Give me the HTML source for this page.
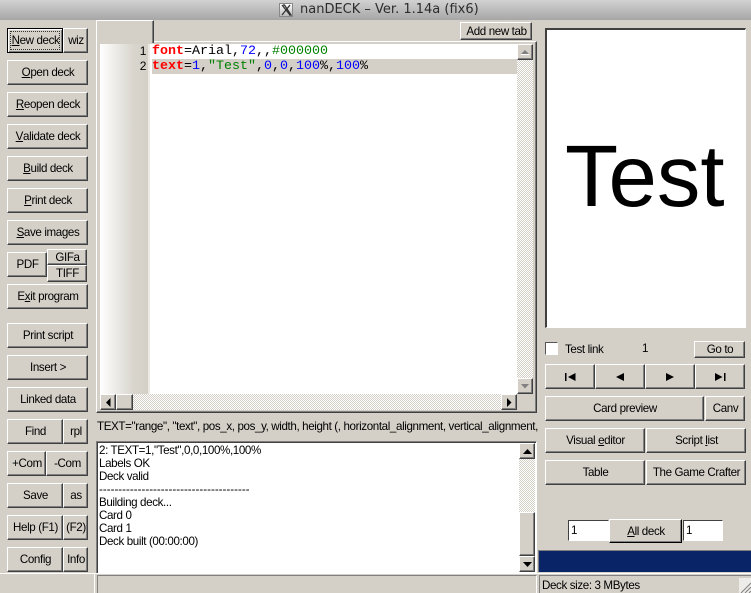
<!DOCTYPE html>
<html><head><meta charset="utf-8">
<style>
html,body{margin:0;padding:0;background:#d4d0c8}
#r{position:relative;width:751px;height:593px;overflow:hidden;background:#d4d0c8;font:11.6px/1 "Liberation Sans",sans-serif;letter-spacing:-.38px;color:#000}
#r div{position:absolute;box-sizing:border-box}
.b{background:#d4d0c8;border-top:1px solid #fff;border-left:1px solid #fff;border-right:1px solid #404040;border-bottom:1px solid #404040;box-shadow:inset -1px -1px 0 #808080;display:flex;align-items:center;justify-content:center;white-space:pre;padding:1px 0 0 1px}
.s{background:#fff;border-top:1px solid #404040;border-left:1px solid #404040;border-right:1px solid #fff;border-bottom:1px solid #fff}
.t{white-space:nowrap}
.d{background:repeating-conic-gradient(#fff 0 25%,#d4d0c8 0 50%) 0 0/2px 2px}
.c{font:13.33px/15px "Liberation Mono",monospace;letter-spacing:0;white-space:pre;color:#000}
.c b{color:#f00}.c i{font-style:normal;color:#00f}.c u{text-decoration:none;color:#008000}
.l{left:99px;white-space:nowrap;height:13px;line-height:13px}
u.m{text-decoration:underline}
svg{display:block}
</style></head><body><div id="r">

<div style="left:0;top:0;width:751px;height:20px;background:linear-gradient(#d2d2d2,#a6a6a6)"></div>
<div style="left:279px;top:3px;width:14px;height:14px;background:linear-gradient(#fff,#bbb);border:1px solid #888"><svg width="12" height="12"><path d="M2 1L10 11M3 1L4.500 1L11 11L9 11M10 1L2 11" stroke="#333" stroke-width="1.300" fill="none"/></svg></div>
<div class="t" style="left:300px;top:2px;font:13px/16px 'DejaVu Sans',sans-serif;color:#2c2c2c;letter-spacing:0">nanDECK – Ver. 1.14a (fix6)</div>

<!-- left buttons -->
<div class="b" style="left:7px;top:28px;width:56px;height:25px;border:1px solid #000;box-shadow:inset 1px 1px 0 #fff,inset -1px -1px 0 #808080"><u class="m">N</u>ew deck</div>
<div style="left:10px;top:31px;width:50px;height:19px;border:1px dotted #333"></div>
<div class="b" style="left:63px;top:28px;width:25px;height:25px">wiz</div>
<div class="b" style="left:7px;top:60px;width:81px;height:25px"><u class="m">O</u>pen deck</div>
<div class="b" style="left:7px;top:92px;width:81px;height:25px"><u class="m">R</u>eopen deck</div>
<div class="b" style="left:7px;top:124px;width:81px;height:25px"><u class="m">V</u>alidate deck</div>
<div class="b" style="left:7px;top:156px;width:81px;height:25px"><u class="m">B</u>uild deck</div>
<div class="b" style="left:7px;top:188px;width:81px;height:25px"><u class="m">P</u>rint deck</div>
<div class="b" style="left:7px;top:220px;width:81px;height:25px"><u class="m">S</u>ave images</div>
<div class="b" style="left:7px;top:252px;width:40px;height:25px">PDF</div>
<div class="b" style="left:47px;top:249px;width:40px;height:16px">GIFa</div>
<div class="b" style="left:47px;top:265px;width:40px;height:17px">TIFF</div>
<div class="b" style="left:7px;top:284px;width:81px;height:25px">E<u class="m">x</u>it program</div>
<div class="b" style="left:7px;top:323px;width:81px;height:25px">Print script</div>
<div class="b" style="left:7px;top:355px;width:81px;height:25px">Insert &gt;</div>
<div class="b" style="left:7px;top:387px;width:81px;height:25px">Linked data</div>
<div class="b" style="left:7px;top:419px;width:56px;height:25px">Find</div>
<div class="b" style="left:63px;top:419px;width:25px;height:25px">rpl</div>
<div class="b" style="left:7px;top:451px;width:39px;height:25px">+Com</div>
<div class="b" style="left:46px;top:451px;width:42px;height:25px">-Com</div>
<div class="b" style="left:7px;top:483px;width:56px;height:25px">Save</div>
<div class="b" style="left:63px;top:483px;width:25px;height:25px">as</div>
<div class="b" style="left:7px;top:515px;width:56px;height:25px">Help (F1)</div>
<div class="b" style="left:63px;top:515px;width:25px;height:25px">(F2)</div>
<div class="b" style="left:7px;top:547px;width:56px;height:25px">Config</div>
<div class="b" style="left:63px;top:547px;width:25px;height:25px">Info</div>

<!-- tab control -->
<div style="left:96px;top:41px;width:441px;height:372px;border-top:1px solid #fff;border-left:1px solid #fff;border-right:1px solid #404040;border-bottom:1px solid #404040;box-shadow:inset -1px -1px 0 #808080"></div>
<div style="left:96px;top:20px;width:58px;height:23px;background:#d4d0c8;border-top:1px solid #fff;border-left:1px solid #fff;border-right:1px solid #404040;box-shadow:inset -1px 0 0 #808080"></div>
<div class="b" style="left:460px;top:22px;width:72px;height:18px">Add new tab</div>

<!-- editor -->
<div style="left:100px;top:44px;width:417px;height:350px;background:#fff"></div>
<div style="left:100px;top:44px;width:48px;height:350px;background:linear-gradient(90deg,#fff,#d8d5cd 70%,#d4d0c8)"></div>
<div style="left:148px;top:44px;width:2px;height:350px;background:#ece9e3"></div>
<div class="t" style="left:134px;top:44px;font:12px/15px 'Liberation Sans',sans-serif;width:12px;text-align:right">1</div>
<div class="t" style="left:134px;top:59px;font:12px/15px 'Liberation Sans',sans-serif;width:12px;text-align:right">2</div>
<div style="left:152px;top:59px;width:365px;height:15px;background:#d4d0c8"></div>
<div class="c" style="left:152px;top:44px"><b>font</b>=Arial,<i>72</i>,,<u>#000000</u></div>
<div class="c" style="left:152px;top:59px"><b>text</b>=<i>1</i>,<u>"Test"</u>,<i>0</i>,<i>0</i>,<i>100</i>%,<i>100</i>%</div>

<!-- editor v scrollbar -->
<div class="d" style="left:517px;top:44px;width:16px;height:350px"></div>
<div class="b" style="left:517px;top:44px;width:16px;height:16px;padding:0"><svg width="8" height="6"><path d="M4 1L8 5H0Z" fill="#808080"/><path d="M0 5.500H8" stroke="#fff"/></svg></div>
<div class="b" style="left:517px;top:378px;width:16px;height:16px;padding:0"><svg width="8" height="5"><path d="M0 0H8L4 4.500Z" fill="#808080"/></svg></div>
<!-- editor h scrollbar -->
<div class="d" style="left:100px;top:394px;width:417px;height:16px"></div>
<div class="b" style="left:100px;top:394px;width:16px;height:16px;padding:0"><svg width="5" height="9"><path d="M4.500 0V9L0 4.500Z" fill="#000"/></svg></div>
<div class="b" style="left:116px;top:394px;width:17px;height:16px"></div>
<div class="b" style="left:501px;top:394px;width:16px;height:16px;padding:0"><svg width="5" height="9"><path d="M0 0V9L4.500 4.500Z" fill="#000"/></svg></div>
<div style="left:517px;top:394px;width:16px;height:16px;background:#d4d0c8"></div>

<div class="t" style="left:97px;top:420px;line-height:13px">TEXT="range", "text", pos_x, pos_y, width, height (, horizontal_alignment, vertical_alignment,</div>

<!-- log -->
<div style="left:96px;top:441px;width:441px;height:133px;background:#fff;border-top:1px solid #808080;border-left:1px solid #808080;border-right:1px solid #fff;border-bottom:1px solid #fff;box-shadow:inset 1px 1px 0 #404040"></div>
<div class="l" style="top:444px">2: TEXT=1,"Test",0,0,100%,100%</div>
<div class="l" style="top:457px">Labels OK</div>
<div class="l" style="top:470px">Deck valid</div>
<div class="l" style="top:483px;width:150px;overflow:hidden;letter-spacing:0">--------------------------------------------------------</div>
<div class="l" style="top:496px">Building deck...</div>
<div class="l" style="top:509px">Card 0</div>
<div class="l" style="top:522px">Card 1</div>
<div class="l" style="top:535px">Deck built (00:00:00)</div>
<div class="d" style="left:519px;top:443px;width:16px;height:129px"></div>
<div class="b" style="left:519px;top:443px;width:16px;height:16px;padding:0"><svg width="9" height="5"><path d="M4.500 0L9 5H0Z" fill="#000"/></svg></div>
<div class="b" style="left:519px;top:512px;width:16px;height:44px"></div>
<div class="b" style="left:519px;top:556px;width:16px;height:16px;padding:0"><svg width="9" height="5"><path d="M0 0H9L4.500 5Z" fill="#000"/></svg></div>

<!-- preview -->
<div class="s" style="left:545px;top:28px;width:201px;height:300px;border-top:2px solid #404040;border-left:2px solid #404040"></div>
<div class="t" style="left:565px;top:128px;font:87px/97px 'Liberation Sans',sans-serif;letter-spacing:0">Test</div>

<!-- right controls -->
<div class="s" style="left:545px;top:342px;width:13px;height:13px;border-top:1px solid #555;border-left:1px solid #555"></div>
<div class="t" style="left:565px;top:343px;line-height:13px">Test link</div>
<div class="t" style="left:642px;top:342px;line-height:13px">1</div>
<div class="b" style="left:694px;top:341px;width:51px;height:17px">Go to</div>

<div class="b" style="left:545px;top:364px;width:50px;height:25px;padding:0"><svg width="11" height="8"><path d="M0 0H1.500V8H0ZM10.500 0V8L3 4Z" fill="#000"/></svg></div>
<div class="b" style="left:595px;top:364px;width:50px;height:25px;padding:0"><svg width="8" height="8"><path d="M8 0V8L0 4Z" fill="#000"/></svg></div>
<div class="b" style="left:645px;top:364px;width:50px;height:25px;padding:0"><svg width="8" height="8"><path d="M0 0V8L8 4Z" fill="#000"/></svg></div>
<div class="b" style="left:695px;top:364px;width:50px;height:25px;padding:0"><svg width="11" height="8"><path d="M0 0V8L7.500 4ZM9 0H10.500V8H9Z" fill="#000"/></svg></div>

<div class="b" style="left:545px;top:396px;width:159px;height:25px">Card preview</div>
<div class="b" style="left:705px;top:396px;width:40px;height:25px">Canv</div>
<div class="b" style="left:545px;top:428px;width:100px;height:25px">Visual <u class="m">e</u>ditor</div>
<div class="b" style="left:646px;top:428px;width:100px;height:25px">Script <u class="m">l</u>ist</div>
<div class="b" style="left:545px;top:460px;width:100px;height:25px">Table</div>
<div class="b" style="left:646px;top:460px;width:100px;height:25px">The Game Crafter</div>

<div class="s" style="left:568px;top:520px;width:41px;height:21px;padding:3px 0 0 2px;line-height:13px">1</div>
<div class="b" style="left:609px;top:519px;width:73px;height:24px;border-right-color:#000;border-bottom-color:#000"><u class="m">A</u>ll deck</div>
<div class="s" style="left:683px;top:520px;width:40px;height:21px;padding:3px 0 0 2px;line-height:13px">1</div>

<div style="left:538px;top:550px;width:213px;height:22px;background:#0a2468;border-top:1px solid #808080;border-left:1px solid #808080"></div>

<!-- status bar -->
<div style="left:0;top:573px;width:751px;height:1px;background:#fff"></div>
<div style="left:0;top:574px;width:95px;height:19px;border-right:1px solid #fff"></div>
<div style="left:97px;top:575px;width:440px;height:18px;border-top:1px solid #808080;border-left:1px solid #808080;border-right:1px solid #fff"></div>
<div style="left:539px;top:575px;width:212px;height:18px;border-top:1px solid #808080;border-left:1px solid #808080"></div>
<div class="t" style="left:542px;top:579px;line-height:13px">Deck size: 3 MBytes</div>
<div style="left:739px;top:578px;width:12px;height:15px;background:#fff;opacity:.6"></div>
<div style="left:739px;top:578px"><svg width="12" height="15"><path d="M12 5L2 15M12 9L6 15M12 13L10 15" stroke="#808080" fill="none"/></svg></div>

</div></body></html>
